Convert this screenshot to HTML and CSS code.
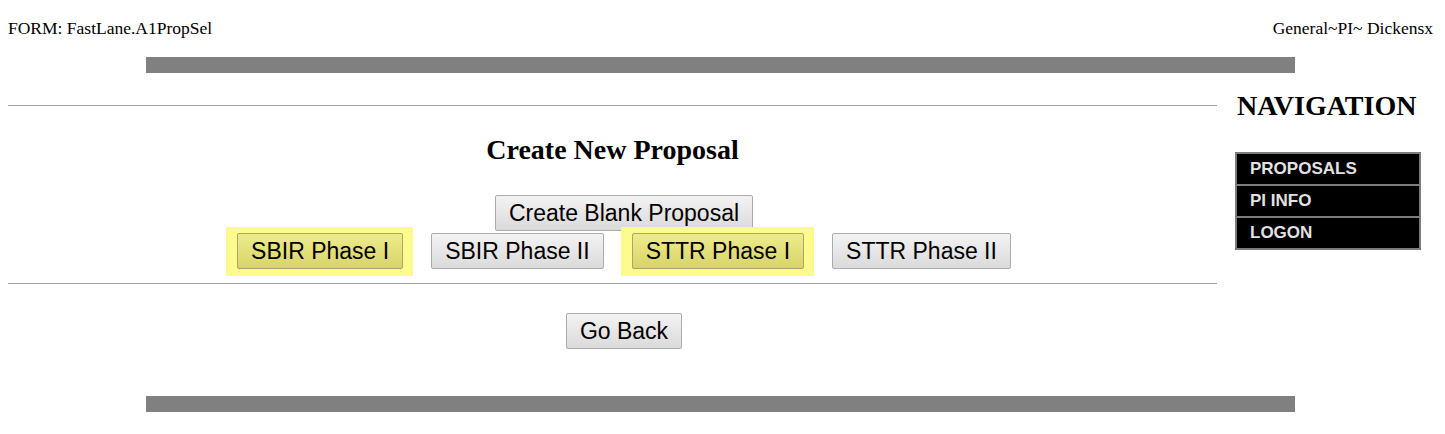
FILE: index.html
```html
<!DOCTYPE html>
<html>
<head>
<meta charset="utf-8">
<title>FastLane</title>
<link rel="stylesheet" href="styles.css">
</head>
<body>
<div class="header">
  <span class="form-name">FORM: FastLane.A1PropSel</span>
  <span class="user">General~PI~ Dickensx</span>
</div>
<div class="graybar"></div>
<div class="main">
  <div class="content">
    <hr class="rule rule-top">
    <h2 class="title">Create New Proposal</h2>
    <div class="btn-row row-one">
      <button class="btn">Create Blank Proposal</button>
    </div>
    <div class="btn-row row-two">
      <span class="hl"><button class="btn btn-hl">SBIR Phase I</button></span>
      <button class="btn">SBIR Phase II</button>
      <span class="hl"><button class="btn btn-hl">STTR Phase I</button></span>
      <button class="btn">STTR Phase II</button>
    </div>
    <hr class="rule rule-bottom">
    <div class="btn-row row-back">
      <button class="btn">Go Back</button>
    </div>
  </div>
  <div class="sidebar">
    <h2 class="nav-title">NAVIGATION</h2>
    <div class="nav">
      <a class="nav-item" href="#">PROPOSALS</a>
      <a class="nav-item" href="#">PI INFO</a>
      <a class="nav-item" href="#">LOGON</a>
    </div>
  </div>
</div>
<div class="graybar graybar-bottom"></div>
</body>
</html>
```

FILE: styles.css
```css
html, body {
  background: #ffffff;
}
body {
  margin: 8px;
  font-family: "Liberation Serif", "Times New Roman", serif;
  color: #000;
}
.header {
  display: flex;
  justify-content: space-between;
  margin-top: 11px;
  font-size: 17.5px;
  line-height: 18px;
  padding-right: 4px;
}
.graybar {
  height: 16px;
  background: #808080;
  width: 1149px;
  margin-left: 138px;
  margin-top: 20px;
}
.graybar-bottom {
  margin-top: 47px;
}
.main {
  display: flex;
  gap: 13px;
}
.content {
  flex: 1;
}
.sidebar {
  flex: 0 0 207px;
  padding-top: 17px;
}
.rule {
  border: 0;
  height: 1px;
  background: #a3a3a3;
  margin: 0;
}
.rule-top {
  margin-top: 32px;
}
.title {
  margin: 28px 0 0 0;
  font-size: 28px;
  line-height: 32px;
  text-align: center;
  font-weight: bold;
}
.btn-row {
  display: flex;
  justify-content: center;
  align-items: center;
  padding-left: 23px;
}
.row-one {
  margin-top: 29px;
}
.row-two {
  margin-top: 2px;
  gap: 28px;
}
.rule-bottom {
  margin-top: 14px;
}
.row-back {
  margin-top: 29px;
}
.btn {
  font-family: "Liberation Sans", Arial, sans-serif;
  font-size: 23px;
  height: 36px;
  padding: 0 13px;
  border: 1px solid #acacac;
  border-radius: 2px;
  background: linear-gradient(#f3f3f3, #dadada);
  color: #000;
}
.hl {
  display: inline-flex;
  background: #fdfa8e;
  padding: 6px 10px 7px 11px;
  margin: -6px -10px -7px -11px;
}
.btn-hl {
  background: linear-gradient(#eeeb8c, #d8d46a);
  border-color: #a9a66c;
}
.nav-title {
  margin: 0;
  padding-left: 7px;
  font-size: 28px;
  line-height: 32px;
  font-weight: bold;
}
.nav {
  margin-top: 30px;
  margin-left: 5px;
  width: 184px;
  border: 1px solid #7a7a7a;
  background: #000;
}
.nav-item {
  display: block;
  height: 30px;
  line-height: 30px;
  border: 1px solid #7a7a7a;
  padding-left: 13px;
  background: #000;
  color: #e2e2e2;
  font-family: "Liberation Sans", Arial, sans-serif;
  font-weight: bold;
  font-size: 17px;
  text-decoration: none;
}
```
